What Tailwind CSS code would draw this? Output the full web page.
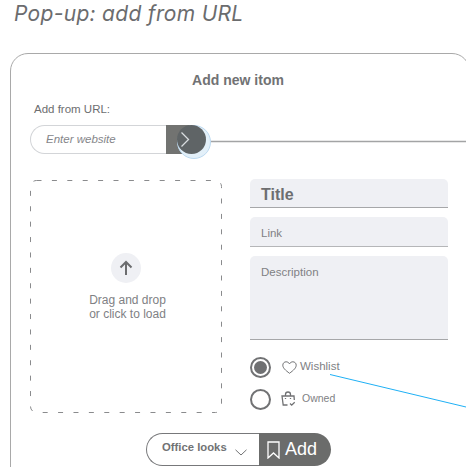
<!DOCTYPE html>
<html lang="en">
<head>
    <meta charset="UTF-8">
    <title>Pop-up: add from URL</title>
    <script src="https://cdn.jsdelivr.net/npm/@tailwindcss/browser@4"></script>
</head>
<body class="bg-white">
    <div class="relative w-[466px] h-[467px] overflow-hidden font-['Liberation_Sans',sans-serif] text-[#6d6e70]">
        <h1 class="pl-[14px] h-[53px] text-[21px] leading-[28px] italic font-['Inter',sans-serif] tracking-[0.3px] text-[#6b6c6e]">Pop-up: add from URL</h1>

        <!-- Card -->
        <div class="ml-[10px] w-[460px] h-[440px] border border-[#a9a9a9] rounded-[18px] pl-[19px]">
            <h2 class="pt-[18px] pr-[23px] text-center text-[14px] leading-[16px] font-bold text-[#717274]">Add new itom</h2>
            <p class="mt-[14px] ml-[4px] text-[11.5px] leading-[14px] text-[#6d6e70]">Add from URL:</p>

            <!-- URL input -->
            <div class="mt-[9px] flex items-center h-[29px]">
                <div class="flex items-center w-[136px] h-[29px] pl-[15px] border border-r-0 border-[#d3d5d8] rounded-l-full text-[11.5px] italic text-[#85868a]">Enter website</div>
                <div class="w-[39px] h-[29px] bg-[#727371] rounded-r-full"></div>
            </div>

            <div class="mt-[26px] flex">
                <!-- Drop zone -->
                <div class="relative w-[192px] h-[233px] flex flex-col items-center">
                    <svg class="absolute inset-0" width="192" height="233" fill="none">
                        <rect x="0.500" y="0.500" width="191" height="232" rx="6" stroke="#8a8b8d" stroke-dasharray="5 10.400"></rect>
                    </svg>
                    <div class="mt-[73px] w-[30px] h-[30px] rounded-full bg-[#eff0f4] flex items-center justify-center">
                        <svg width="16" height="16" viewBox="0 0 16 16" fill="none" stroke="#6b6c6e" stroke-width="2">
                            <path d="M8 15V2M2.500 7.500 8 2l5.500 5.500"></path>
                        </svg>
                    </div>
                    <p class="mt-[10px] ml-[3px] text-center text-[12px] leading-[14px] text-[#808184]">Drag and drop<br>or click to load</p>
                </div>

                <!-- Fields -->
                <div class="ml-[28px] mt-[-1px] w-[198px]">
                    <div class="h-[29px] bg-[#eff0f4] rounded-t-[5px] border-b border-[#a6a7a9] pl-[11px] pt-[6px] text-[16px] leading-[20px] font-bold text-[#6d6e70]">Title</div>
                    <div class="mt-[9px] h-[30px] bg-[#eff0f4] rounded-t-[5px] border-b border-[#b5b6b8] pl-[11px] pt-[9px] text-[11.500px] leading-[14px] text-[#808184]">Link</div>
                    <div class="mt-[9px] h-[84px] bg-[#eff0f4] rounded-t-[5px] border-b border-[#a6a7a9] pl-[11px] pt-[9px] text-[11.500px] leading-[14px] text-[#808184]">Description</div>

                    <!-- Radios -->
                    <div class="mt-[16px] flex items-center h-[22px]">
                        <div class="w-[21px] h-[21px] rounded-full border-2 border-[#717274] flex items-center justify-center">
                            <div class="w-[13px] h-[13px] rounded-full bg-[#6f7072]"></div>
                        </div>
                        <svg class="ml-[11px]" width="15" height="13" viewBox="0 0 15 13" fill="none" stroke="#717274" stroke-width="1">
                            <path d="M7.500 12.300C3.500 9.300 .8 7 .8 4.200.8 2.200 2.300.8 4.100.8c1.400 0 2.600.7 3.400 2 .8-1.300 2-2 3.400-2 1.800 0 3.300 1.400 3.300 3.400 0 2.800-2.700 5.100-6.700 8.100Z"></path>
                        </svg>
                        <span class="ml-[3px] text-[11.500px] text-[#808184]">Wishlist</span>
                    </div>
                    <div class="mt-[10px] flex items-center h-[22px]">
                        <div class="w-[21px] h-[21px] rounded-full border-2 border-[#717274]"></div>
                        <svg class="ml-[10px]" width="15" height="16" viewBox="0 0 15 16" fill="none" stroke="#717274" stroke-width="1.300">
                            <path d="M6.500 14H2.200L1 5h12l.3 4M4.500 5V3.500a2.500 2.500 0 0 1 5 0V5M4.500 7v1M9.500 7v1M9 12.500l1.700 1.700 3-3"></path>
                        </svg>
                        <span class="ml-[6px] text-[10.500px] text-[#808184]">Owned</span>
                    </div>
                </div>
            </div>
        </div>

        <!-- Blue focus circle on the URL arrow -->
        <div class="absolute left-[177px] top-[125px] w-[34px] h-[34px] rounded-full bg-[#e3f0f9] border border-[#bcd9f0]"></div>
        <div class="absolute left-[177px] top-[125px] w-[29px] h-[29px] rounded-full bg-[#5f6466] flex items-center pl-[3px]">
            <svg width="10" height="17" viewBox="0 0 10 17" fill="none" stroke="#d9dde0" stroke-width="1.300">
                <path d="M1.500 1.500 8.500 8.500l-7 7"></path>
            </svg>
        </div>

        <!-- Connector lines -->
        <svg class="absolute left-0 top-0 pointer-events-none" width="466" height="467" fill="none">
            <path d="M211 141.500H466" stroke="#a3a4a5" stroke-width="1.300"></path>
            <path d="M330 374.500 466 407" stroke="#1fb0f5" stroke-width="1"></path>
        </svg>

        <!-- Collection + Add button -->
        <div class="absolute left-[146px] top-[433px] flex h-[33px] w-[185px]">
            <div class="w-[113px] border border-r-0 border-[#77787a] rounded-l-full bg-white flex pl-[15px] pt-[6px]">
                <span class="text-[11.300px] leading-[14px] font-bold text-[#717274]">Office looks</span>
                <svg class="ml-[8px] mt-[9px]" width="12" height="7" viewBox="0 0 12 7" fill="none" stroke="#717274" stroke-width="1">
                    <path d="M.5.800 6 6l5.500-5.200"></path>
                </svg>
            </div>
            <div class="flex-1 bg-[#6b6c6b] rounded-r-full flex items-center pl-[8px] text-white text-[18px]">
                <svg width="13" height="18" viewBox="0 0 13 18" fill="none" stroke="#fff" stroke-width="1.300">
                    <path d="M1 1h11v16l-5.500-5L1 17Z"></path>
                </svg>
                <span class="ml-[5px]">Add</span>
            </div>
        </div>
    </div>
</body>
</html>
